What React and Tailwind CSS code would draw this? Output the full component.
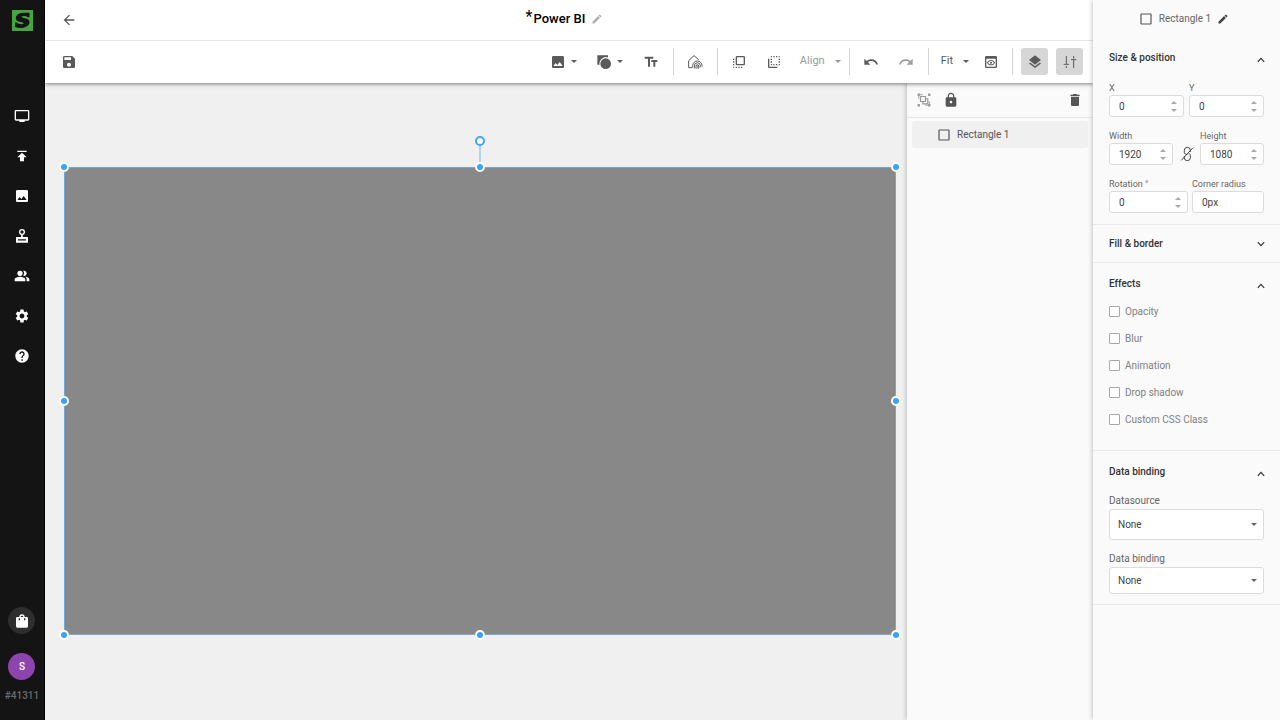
import React from 'react';
import clsx from 'clsx';
import {
  MdArrowBack,
  MdDelete,
  MdEdit,
  MdFlipToBack,
  MdFlipToFront,
  MdHelp,
  MdImage,
  MdLayers,
  MdLock,
  MdOutlinePreview,
  MdPeopleAlt,
  MdPublish,
  MdRedo,
  MdSave,
  MdSettings,
  MdTextFields,
  MdTv,
  MdUndo,
} from 'react-icons/md';

/* ---------- Icons ---------- */

function LogoIcon() {
  return (
    <svg viewBox="0 0 21 21" className="h-[21px] w-[21px]">
      <rect width="21" height="21" fill="#47a540" />
      <path
        fill="#141414"
        d="M17.500 3v4.200h-1.600c-1.200-.9-3-1.300-4.600-1.200-1.400.1-2 .6-1.600 1.100.4.6 2 .8 3.900 1.300 2.600.6 3.900 1.700 3.900 3.700 0 3.300-3.100 5.600-7.500 5.900-2.700.2-4.900-.2-7-.9v-4.600h1.700c1.400 1.200 3.500 1.900 5.200 1.700 1.300-.1 1.900-.7 1.500-1.200-.4-.6-2-.8-3.800-1.300C5 11 3.800 10 3.800 8.200c0-2.900 2.900-5.100 7.100-5.400 2.400-.2 4.600-.1 6.600.2z"
      />
    </svg>
  );
}

function StampIcon({ className }) {
  return (
    <svg viewBox="0 0 24 24" className={className} fill="none" stroke="currentColor" strokeWidth="2">
      <circle cx="12" cy="6" r="3.500" />
      <path d="M12 9.500V15" strokeWidth="2.500" />
      <path d="M4 13.500h16a1 1 0 0 1 1 1V22H3v-7.500a1 1 0 0 1 1-1zm2 3.300v2h12v-2z" fill="currentColor" fillRule="evenodd" stroke="none" />
    </svg>
  );
}

function BagIcon({ className }) {
  return (
    <svg viewBox="0 0 24 24" className={className} fill="currentColor">
      <path d="M12 2a4 4 0 0 0-4 4H5a2 2 0 0 0-2 2v12a2 2 0 0 0 2 2h14a2 2 0 0 0 2-2V8a2 2 0 0 0-2-2h-3a4 4 0 0 0-4-4zm0 2a2 2 0 0 1 2 2h-4a2 2 0 0 1 2-2zM7 8h2v3H7zm8 0h2v3h-2z" />
    </svg>
  );
}

function ShapesIcon({ className }) {
  return (
    <svg viewBox="0 0 24 24" className={className} fill="currentColor">
      <path d="M2 2h16v3.200A9.600 9.600 0 0 0 5.400 16H2z" />
      <circle cx="14.500" cy="14.500" r="8" />
    </svg>
  );
}

function HomeSignalIcon({ className }) {
  return (
    <svg viewBox="0 0 24 24" className={className} fill="none" stroke="currentColor" strokeWidth="1.500">
      <path d="M8 20.500H2.500V10l8-7.500 7 6" />
      <path d="M8.500 20v-2.500a7 7 0 0 1 14 0V19" />
      <path d="M11 21.500v-3.800a4.500 4.500 0 0 1 9 0V20" />
      <path d="M13.500 22v-4a2 2 0 0 1 4 0v4" />
      <path d="M15.500 17v5" strokeWidth="1" />
    </svg>
  );
}

function SlidersIcon({ className }) {
  return (
    <svg viewBox="0 0 24 24" className={className} fill="none" stroke="currentColor" strokeWidth="1.500">
      <path d="M6.500 3v12M6.500 18v3M2.500 15.500h8M17.500 3v4M17.500 9v12M13.500 8.500h8" />
    </svg>
  );
}

function GroupIcon({ className }) {
  return (
    <svg viewBox="0 0 24 24" className={className} fill="none" stroke="currentColor" strokeWidth="2">
      <path d="M5 3h5M3 5v5M21 14v5M14 21h5" strokeWidth="1.500" />
      <path d="M1 1h4v4H1zM19 1h4v4h-4zM1 19h4v4H1zM19 19h4v4h-4z" fill="currentColor" stroke="none" />
      <path d="M6 6h8.500v8.500H6zM10 14.500V18.500h8.500V10h-4" />
    </svg>
  );
}

function LinkOffIcon({ className }) {
  return (
    <svg viewBox="0 0 24 24" className={className} fill="none" stroke="currentColor" strokeWidth="1.500">
      <path d="M8 10V6.500a4.500 4.500 0 0 1 9 0V9M8 15v2.500a4.500 4.500 0 0 0 9 0V14M3.500 21.500 21 2.500M8 10c0 2 2 2.500 4.500 2.500M17 14c0-1.500-1-2.500-2.500-2.500" />
    </svg>
  );
}

function SquareIcon({ className }) {
  return (
    <svg viewBox="0 0 12 12" className={className} fill="none" stroke="currentColor" strokeWidth="1.200">
      <rect x="1" y="1" width="10" height="10" rx="0.500" />
    </svg>
  );
}

function Caret() {
  return (
    <svg viewBox="0 0 6 3" className="h-[3px] w-[6px] shrink-0" fill="currentColor">
      <path d="M0 0h6L3 3z" />
    </svg>
  );
}

function Chevron({ open }) {
  return (
    <svg
      viewBox="0 0 8 6"
      className={clsx('-mr-px h-[6px] w-[8px]', open ? 'mt-[5px]' : 'mt-px')}
      fill="none"
      stroke="currentColor"
      strokeWidth="1.200"
    >
      <path d={open ? 'M.8 4.800 4 1.300l3.200 3.500' : 'M.8 1.200 4 4.700l3.200-3.500'} />
    </svg>
  );
}

/* ---------- Sidebar ---------- */

const navItems = [
  { label: 'Screens', icon: MdTv },
  { label: 'Publish', icon: MdPublish },
  { label: 'Media', icon: MdImage },
  { label: 'Templates', icon: StampIcon },
  { label: 'Users', icon: MdPeopleAlt },
  { label: 'Settings', icon: MdSettings },
  { label: 'Help', icon: MdHelp },
];

function Sidebar() {
  return (
    <aside className="flex w-[45px] shrink-0 flex-col items-center border-r border-black bg-[#141414] pt-[10px] pb-4 text-white">
      <a href="#home" aria-label="Home">
        <LogoIcon />
      </a>
      <nav className="mt-[65px] flex flex-col">
        {navItems.map(({ label, icon: Icon }) => (
          <a key={label} href={`#${label.toLowerCase()}`} aria-label={label} className="flex h-10 w-11 items-center justify-center">
            <Icon className="h-4 w-4" />
          </a>
        ))}
      </nav>
      <div className="mt-auto flex flex-col items-center">
        <button aria-label="Store" className="flex h-[27px] w-[27px] items-center justify-center rounded-full bg-[#2e2e2e]">
          <BagIcon className="h-4 w-4" />
        </button>
        <button className="mt-[19px] flex h-[27px] w-[27px] items-center justify-center rounded-full bg-[#8e44ad] text-[10px] font-medium">
          S
        </button>
        <span className="mt-2 text-[10px] leading-4 font-medium text-[#6b6b6b]">#41311</span>
      </div>
    </aside>
  );
}

/* ---------- Header + toolbar ---------- */

function ToolButton({ label, active, muted, children }) {
  return (
    <button
      aria-label={label}
      className={clsx(
        'flex h-[27px] w-[27px] items-center justify-center rounded-[3px]',
        active && 'bg-[#d6d6d6]',
        muted && 'text-[#9e9e9e]'
      )}
    >
      {children}
    </button>
  );
}

function Divider() {
  return <span className="h-[27px] w-px bg-[#d4d4d4]" />;
}

function Toolbar() {
  return (
    <div className="relative z-10 flex h-[42px] shrink-0 items-center justify-between bg-white px-[10px] pb-px text-[#5a5a5a] shadow-[0_1px_4px_rgba(0,0,0,0.5)]">
      <ToolButton label="Save"><MdSave className="h-4 w-4" /></ToolButton>
      <div className="flex items-center gap-2">
        <button aria-label="Insert media" className="flex items-center gap-[5px] pr-[7px]">
          <MdImage className="h-4 w-4" />
          <Caret />
        </button>
        <button aria-label="Insert shape" className="flex items-center gap-[5px] pr-[7px] pl-1">
          <ShapesIcon className="h-4 w-4" />
          <Caret />
        </button>
        <ToolButton label="Insert text"><MdTextFields className="h-4 w-4" /></ToolButton>
        <Divider />
        <ToolButton label="Insert widget"><HomeSignalIcon className="h-4 w-4" /></ToolButton>
        <Divider />
        <ToolButton label="Bring to front"><MdFlipToFront className="h-4 w-4" /></ToolButton>
        <ToolButton label="Send to back"><MdFlipToBack className="h-4 w-4" /></ToolButton>
        <button className="flex items-center gap-[10px] pl-1 text-[11px] text-[#999]">
          Align
          <Caret />
        </button>
        <Divider />
        <ToolButton label="Undo"><MdUndo className="h-4 w-4" /></ToolButton>
        <ToolButton label="Redo" muted><MdRedo className="h-4 w-4" /></ToolButton>
        <Divider />
        <button className="flex items-center gap-[10px] pl-1 text-[11px]">
          Fit
          <Caret />
        </button>
        <ToolButton label="Preview"><MdOutlinePreview className="h-4 w-4" /></ToolButton>
        <Divider />
        <ToolButton label="Layers" active><MdLayers className="h-4 w-4" /></ToolButton>
        <ToolButton label="Properties" active><SlidersIcon className="h-4 w-4" /></ToolButton>
      </div>
    </div>
  );
}

function Header() {
  return (
    <header className="relative z-20 flex h-[41px] shrink-0 items-center border-b border-[#e4e4e4] bg-white px-[15px]">
      <button aria-label="Back" className="p-px text-[#555]">
        <MdArrowBack className="h-4 w-4" />
      </button>
      <div className="flex flex-1 items-center justify-center pr-[27px] pb-[2px]">
        <h1 className="flex gap-px text-[13px] leading-5 font-medium text-black">
          <span className="text-base leading-4 font-normal">*</span>
          Power BI
        </h1>
        <button aria-label="Rename" className="ml-[6px] text-[#b0b0b0]">
          <MdEdit className="h-3 w-3" />
        </button>
      </div>
    </header>
  );
}

/* ---------- Canvas ---------- */

const handles = [
  'left-0 top-0',
  'left-1/2 top-0',
  'left-full top-0',
  'left-0 top-1/2',
  'left-full top-1/2',
  'left-0 top-full',
  'left-1/2 top-full',
  'left-full top-full',
];

function Canvas() {
  return (
    <main className="flex min-w-0 flex-1 items-center bg-[#f0f0f0] pr-[11px] pb-[2px] pl-[19px]">
      <div className="relative aspect-video w-full bg-[#888] outline -outline-offset-1 outline-[#74a8d8]">
        <span className="absolute bottom-full left-1/2 h-[26px] w-[2px] -translate-x-1/2 bg-[#a9d3f7]" />
        <span className="absolute -top-[26px] left-1/2 h-[10px] w-[10px] -translate-1/2 rounded-full border-2 border-[#42a5f9] bg-white" />
        {handles.map((position) => (
          <span
            key={position}
            className={clsx('absolute h-[10px] w-[10px] -translate-1/2 rounded-full border-2 border-white bg-[#3ba2fb]', position)}
          />
        ))}
      </div>
    </main>
  );
}

/* ---------- Layers ---------- */

function LayersPanel() {
  return (
    <section aria-label="Layers" className="w-[186px] shrink-0 bg-[#fafafa] text-[#555] shadow-[0_0_5px_rgba(0,0,0,0.3)]">
      <div className="flex h-[35px] items-center border-b border-[#e8e8e8] px-[10px]">
        <button aria-label="Group" className="text-[#999]"><GroupIcon className="h-[14px] w-[14px]" /></button>
        <button aria-label="Lock" className="ml-3"><MdLock className="h-4 w-4" /></button>
        <button aria-label="Delete" className="ml-auto"><MdDelete className="h-4 w-4" /></button>
      </div>
      <ul className="p-[5px] pt-[3px]">
        <li className="flex h-[27px] items-center gap-[7px] rounded-[3px] bg-[#f0f0f0] pl-[26px] text-[10px]">
          <SquareIcon className="h-3 w-3" />
          Rectangle 1
        </li>
      </ul>
    </section>
  );
}

/* ---------- Properties ---------- */

function Section({ title, open = true, children }) {
  return (
    <section className={clsx('border-b border-[#ebebeb] px-4', open ? 'pt-[11px] pb-2' : 'pt-[9px] pb-[10px]')}>
      <button aria-expanded={open} className="flex h-[18px] w-full items-center justify-between text-[10px] font-medium text-[#333]">
        {title}
        <Chevron open={open} />
      </button>
      {children}
    </section>
  );
}

function Field({ id, label, value, spinner = true, className }) {
  return (
    <div className={className}>
      <label htmlFor={id} className="block text-[9px] leading-3 text-[#666]">{label}</label>
      <div className="mt-px flex h-[22px] items-center rounded-[3px] border border-[#dcdcdc] bg-white pr-[6px] pl-[9px]">
        <input id={id} defaultValue={value} className="w-full min-w-0 text-[10px] text-[#444] outline-none" />
        {spinner && (
          <span className="flex flex-col gap-[5px] text-[#aaa]">
            <button aria-label={`Increase ${label}`} className="rotate-180"><Caret /></button>
            <button aria-label={`Decrease ${label}`}><Caret /></button>
          </span>
        )}
      </div>
    </div>
  );
}

function SelectField({ id, label, className }) {
  return (
    <div>
      <label htmlFor={id} className="block text-[10px] leading-3 text-[#666]">{label}</label>
      <div className="relative mt-[2px] flex items-center">
        <select
          id={id}
          className={clsx('w-full appearance-none rounded-[3px] border border-[#dcdcdc] bg-white pl-2 text-[10px] text-[#444]', className)}
        >
          <option>None</option>
        </select>
        <span className="pointer-events-none absolute right-[7px] text-[#666]"><Caret /></span>
      </div>
    </div>
  );
}

const effects = ['Opacity', 'Blur', 'Animation', 'Drop shadow', 'Custom CSS Class'];

function PropertiesPanel() {
  return (
    <aside className="z-20 w-[187px] shrink-0 bg-[#fafafa] shadow-[0_0_5px_rgba(0,0,0,0.3)]">
      <div className="flex h-[37px] items-center justify-center gap-[7px] pr-1 text-[10px] text-[#666]">
        <SquareIcon className="h-3 w-3 text-[#555]" />
        Rectangle 1
        <button aria-label="Rename layer" className="-ml-px text-[#444]"><MdEdit className="h-3 w-3" /></button>
      </div>

      <Section title="Size & position">
        <div className="mt-4 flex gap-[5px]">
          <Field id="pos-x" label="X" value="0" className="flex-1" />
          <Field id="pos-y" label="Y" value="0" className="flex-1" />
        </div>
        <div className="mt-[13px] flex items-end">
          <Field id="width" label="Width" value="1920" className="flex-1" />
          <button aria-label="Link width and height" className="flex h-[22px] w-[27px] items-center justify-center text-[#444]">
            <LinkOffIcon className="h-4 w-4" />
          </button>
          <Field id="height" label="Height" value="1080" className="flex-1" />
        </div>
        <div className="mt-[13px] mb-[3px] flex gap-1">
          <Field id="rotation" label="Rotation °" value="0" className="flex-1" />
          <Field id="radius" label="Corner radius" value="0px" spinner={false} className="w-[72px]" />
        </div>
      </Section>

      <Section title="Fill & border" open={false} />

      <Section title="Effects">
        <div className="mt-[6px] mb-[9px]">
          {effects.map((effect) => (
            <label key={effect} className="flex h-[27px] items-center gap-[5px] text-[10px] text-[#808080]">
              <input type="checkbox" className="h-[11px] w-[11px] appearance-none rounded-[1px] border border-[#a8a8a8] bg-white" />
              {effect}
            </label>
          ))}
        </div>
      </Section>

      <Section title="Data binding">
        <div className="mt-[15px] mb-[2px] flex flex-col gap-[13px]">
          <SelectField id="datasource" label="Datasource" className="h-[31px]" />
          <SelectField id="binding" label="Data binding" className="h-[27px]" />
        </div>
      </Section>
    </aside>
  );
}

export default function App() {
  return (
    <div className="flex h-screen overflow-hidden bg-[#f0f0f0] font-[Roboto,sans-serif]">
      <Sidebar />
      <div className="flex min-w-0 flex-1 flex-col">
        <Header />
        <Toolbar />
        <div className="flex min-h-0 flex-1">
          <Canvas />
          <LayersPanel />
        </div>
      </div>
      <PropertiesPanel />
    </div>
  );
}
